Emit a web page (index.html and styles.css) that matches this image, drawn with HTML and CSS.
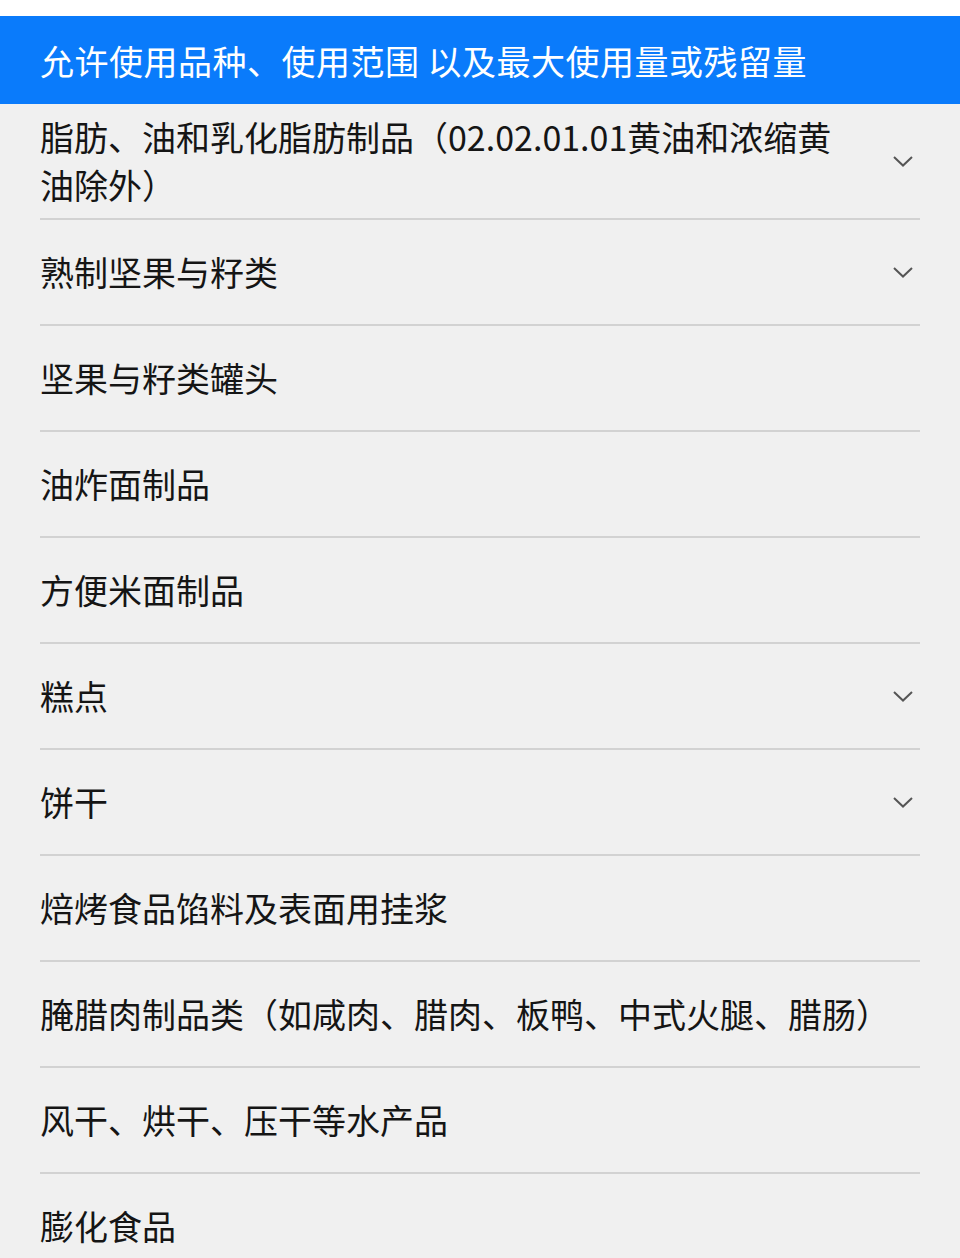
FILE: index.html
```html
<!DOCTYPE html>
<html lang="zh-CN">
<head>
    <meta charset="UTF-8">
    <meta name="viewport" content="width=device-width, initial-scale=1.0">
    <title>允许使用品种</title>
    <link rel="stylesheet" href="styles.css">
</head>
<body>
    <div class="page">
        <div class="title-bar">允许使用品种、使用范围 以及最大使用量或残留量</div>

        <ul class="food-list">
            <li class="food-item">
                <span class="food-name">脂肪、油和乳化脂肪制品（02.02.01.01黄油和浓缩黄油除外）</span>
                <svg class="arrow" width="20" height="11" viewBox="0 0 20 11"><polyline points="1,1 10,9.5 19,1" /></svg>
            </li>
            <li class="food-item">
                <span class="food-name">熟制坚果与籽类</span>
                <svg class="arrow" width="20" height="11" viewBox="0 0 20 11"><polyline points="1,1 10,9.5 19,1" /></svg>
            </li>
            <li class="food-item">
                <span class="food-name">坚果与籽类罐头</span>
            </li>
            <li class="food-item">
                <span class="food-name">油炸面制品</span>
            </li>
            <li class="food-item">
                <span class="food-name">方便米面制品</span>
            </li>
            <li class="food-item">
                <span class="food-name">糕点</span>
                <svg class="arrow" width="20" height="11" viewBox="0 0 20 11"><polyline points="1,1 10,9.5 19,1" /></svg>
            </li>
            <li class="food-item">
                <span class="food-name">饼干</span>
                <svg class="arrow" width="20" height="11" viewBox="0 0 20 11"><polyline points="1,1 10,9.5 19,1" /></svg>
            </li>
            <li class="food-item">
                <span class="food-name">焙烤食品馅料及表面用挂浆</span>
            </li>
            <li class="food-item">
                <span class="food-name">腌腊肉制品类（如咸肉、腊肉、板鸭、中式火腿、腊肠）</span>
            </li>
            <li class="food-item">
                <span class="food-name">风干、烘干、压干等水产品</span>
            </li>
            <li class="food-item">
                <span class="food-name">膨化食品</span>
            </li>
        </ul>
    </div>
</body>
</html>
```

FILE: styles.css
```css
body {
    margin: 0;
    padding: 16px 0 0;
    background: #ffffff;
    font-family: "Noto Sans CJK SC", "Noto Sans", sans-serif;
}
.page {
    background: #f0f0f0;
    min-height: 1242px;
}
.title-bar {
    height: 88px;
    display: flex;
    align-items: center;
    padding: 0 40px;
    background: #0a7bfb;
    color: #ffffff;
    font-size: 34px;
    letter-spacing: 0.5px;
    white-space: nowrap;
}
.food-list {
    list-style: none;
    margin: 0;
    padding: 0 40px;
}
.food-item {
    box-sizing: border-box;
    min-height: 106px;
    padding: 9px 0;
    display: flex;
    align-items: center;
    border-bottom: 2px solid #d2d2d2;
    color: #151515;
    font-size: 34px;
    line-height: 48px;
}
.food-name {
    flex: 1;
    padding-right: 40px;
}
.arrow {
    flex-shrink: 0;
    margin-right: 7px;
}
.arrow polyline {
    fill: none;
    stroke: #555555;
    stroke-width: 2;
}
```
